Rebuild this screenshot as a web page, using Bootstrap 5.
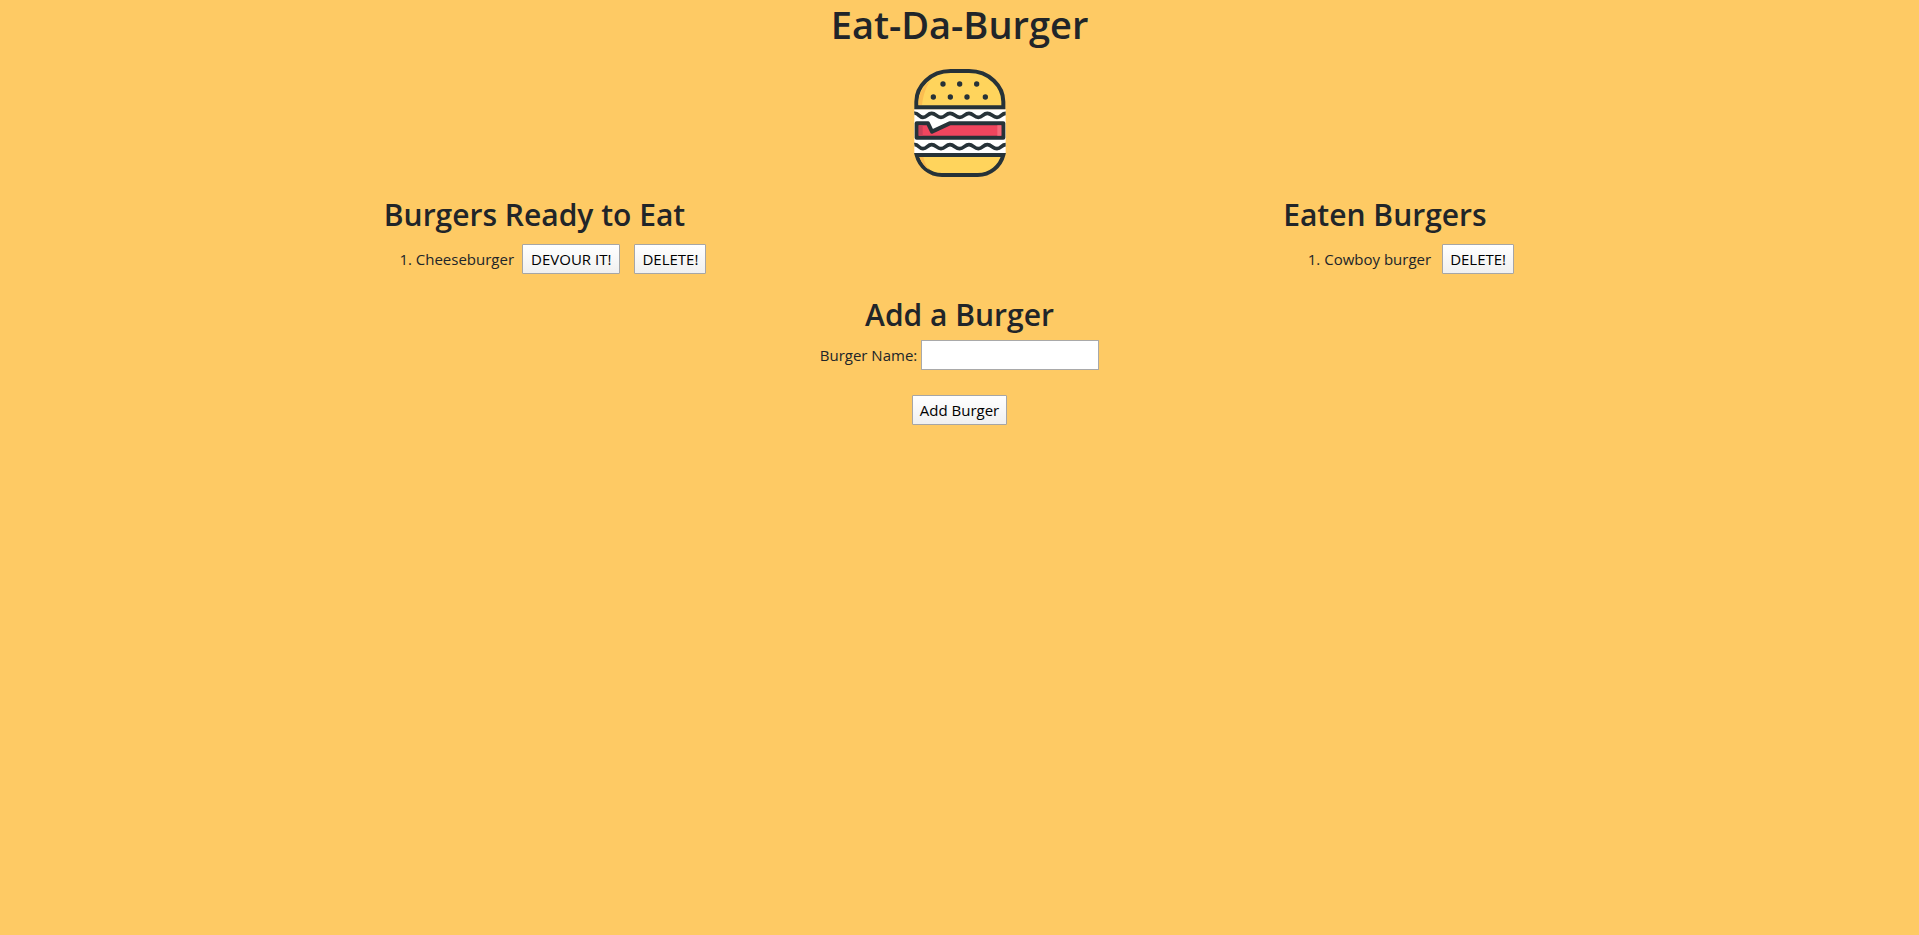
<!DOCTYPE html>
<html lang="en">
<head>
<meta charset="utf-8">
<meta name="viewport" content="width=device-width, initial-scale=1">
<title>Eat-Da-Burger</title>
<link href="https://cdn.jsdelivr.net/npm/bootstrap@5.3.0/dist/css/bootstrap.min.css" rel="stylesheet">
<style>
  body { background: #feca64; color: #212529; font-family: "Open Sans", "Noto Sans", sans-serif; font-size: 15px; line-height: 24px; }
  h1, h2 { font-weight: 600; margin: 0; }
  h1 { font-size: 38px; line-height: 48px; }
  h2 { font-size: 30px; line-height: 38px; }
  .burger-logo { width: 92px; height: 110px; margin-top: 20px; }
  .burger-lists { margin: 18px 20% 0; }
  .burger-lists ol { margin: 10px 0 0; padding-left: 32px; }
  .eaten-list { min-width: 252px; }
  .eaten-list ol { padding-left: 41px; }
  .eaten-list .burger-title { margin-right: 11px; }
  .burger-title { margin-right: 8px; }
  .plain-btn { height: 30px; padding: 0 7px; color: #000; border: 1px solid #a6a6a6; border-radius: 1px; background: linear-gradient(#fff, #f0f0f0); line-height: 24px; }
  .plain-btn:hover { background: #eaeaea; }
  .devour-btn { padding: 0 8px; }
  .delete-gap { margin-left: 14px; }
  .burger-input { width: 178px; height: 30px; border: 1px solid #a9a9a9; padding: 1px 4px; }
  .burger-form { margin-top: 22px; }
  .burger-field { margin: 6px 0 25px; }
</style>
</head>
<body>
<header class="text-center">
  <h1>Eat-Da-Burger</h1>
  <svg class="burger-logo d-block mx-auto" viewBox="44 26 276 330" role="img" aria-label="Burger">
    <path fill="#fff" d="M45 150H319V282H45Z"/>
    <path fill="#ffd45c" stroke="#263238" stroke-width="12" d="M51 144V127C51 82 92 35 154 35H209C271 35 312 82 312 127V144Z"/>
    <path fill="#fbbd50" d="M58 137V127C58 105 70 82 92 65C80 84 72 106 68 137Z"/>
    <g fill="#263238"><circle cx="131" cy="74" r="8"/><circle cx="181" cy="74" r="8"/><circle cx="232" cy="74" r="8"/><circle cx="102" cy="113" r="8"/><circle cx="153" cy="113" r="8"/><circle cx="203" cy="113" r="8"/><circle cx="258" cy="113" r="8"/></g>
    <g fill="none" stroke="#263238" stroke-width="11">
      <path d="M45 162C57 160 58 174 71 174S84 162 97 162S112 174 125 174S139 162 152 162S168 174 181 174S196 162 209 162S224 174 237 174S251 162 264 162S280 174 293 174S306 162 319 162"/>
      <path d="M45 256C57 254 58 268 71 268S84 256 97 256S112 268 125 268S139 256 152 256S168 268 181 268S196 256 209 256S224 268 237 268S251 256 264 256S280 268 293 268S306 256 319 256"/>
    </g>
    <path fill="#f0455e" stroke="#263238" stroke-width="12" stroke-linejoin="round" d="M52 192H86L98 217L151 192H312V235H52Z"/>
    <path fill="#c9405a" d="M58 198H70V229H58Z"/><path fill="#f56a7b" d="M294 198H306V229H294Z"/>
    <path fill="#ffd45c" stroke="#263238" stroke-width="12" d="M52 287H312C303 321 273 347 235 347H128C90 347 61 321 52 287Z"/>
    <path fill="#fbbd50" d="M60 293H72C76 310 81 321 90 332C76 323 65 308 60 293Z"/>
  </svg>
</header>
<main>
  <div class="burger-lists d-flex justify-content-between">
    <section>
      <h2>Burgers Ready to Eat</h2>
      <ol>
        <li><div class="d-flex align-items-center"><span class="burger-title">Cheeseburger</span><button type="button" class="plain-btn devour-btn">DEVOUR IT!</button><button type="button" class="plain-btn delete-gap">DELETE!</button></div></li>
      </ol>
    </section>
    <section class="eaten-list">
      <h2>Eaten Burgers</h2>
      <ol>
        <li><div class="d-flex align-items-center"><span class="burger-title">Cowboy burger</span><button type="button" class="plain-btn">DELETE!</button></div></li>
      </ol>
    </section>
  </div>
  <section class="burger-form text-center">
    <h2>Add a Burger</h2>
    <form>
      <div class="burger-field d-flex justify-content-center align-items-center">
        <label for="burger-name" class="me-1">Burger Name:</label>
        <input type="text" id="burger-name" class="burger-input">
      </div>
      <button type="button" class="plain-btn">Add Burger</button>
    </form>
  </section>
</main>
<script src="https://cdn.jsdelivr.net/npm/bootstrap@5.3.0/dist/js/bootstrap.bundle.min.js"></script>
</body>
</html>
